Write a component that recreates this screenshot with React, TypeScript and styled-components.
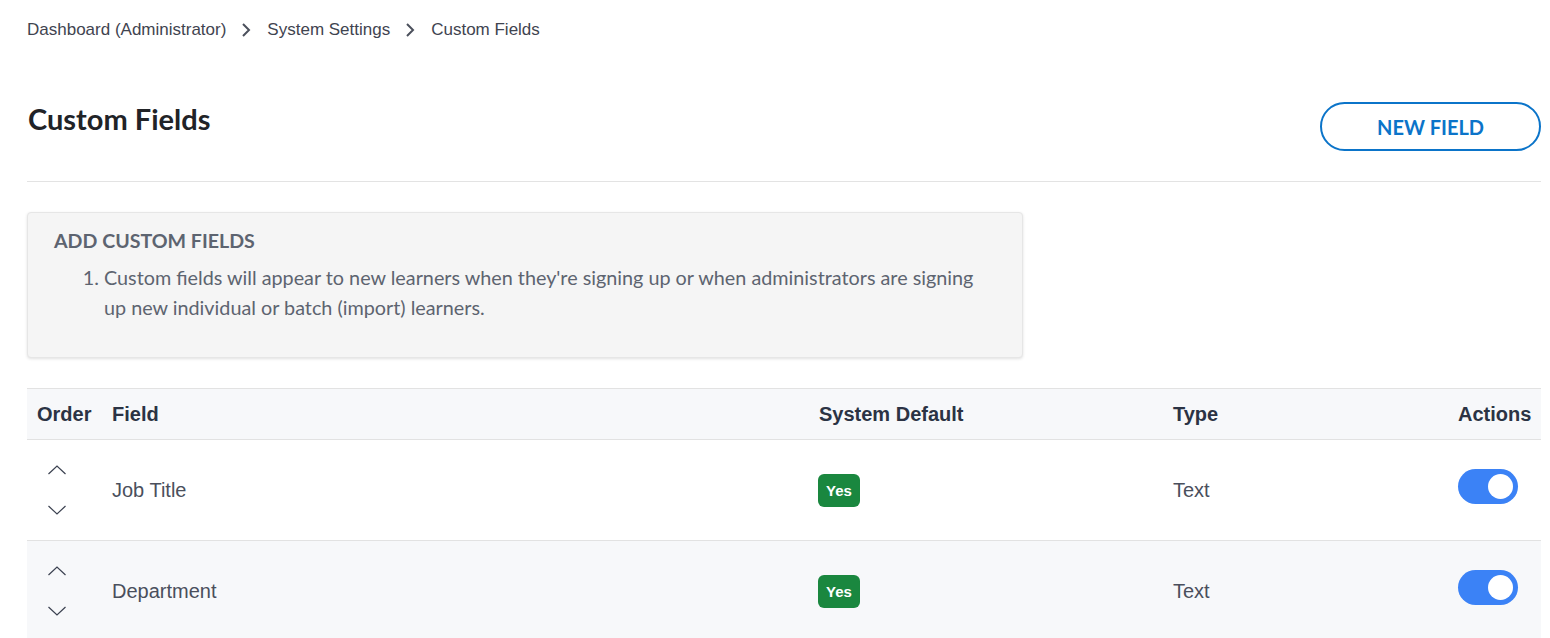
import { useState } from "react";
import styled, { createGlobalStyle } from "styled-components";

type Field = {
  id: number;
  name: string;
  systemDefault: boolean;
  type: string;
  enabled: boolean;
};

const GlobalStyle = createGlobalStyle`
  body {
    margin: 0;
    background: #ffffff;
    font-family: "Liberation Sans", Arial, sans-serif;
  }
`;

const Page = styled.div`
  padding: 0 9px 0 27px;
`;

const Breadcrumb = styled.nav`
  display: flex;
  align-items: center;
  height: 60px;
  font-size: 17px;
  color: #3f4450;
`;

const Crumb = styled.span`
  white-space: nowrap;
`;

const CrumbSep = styled.svg`
  width: 10px;
  height: 16px;
  margin: 0 16px 0 15px;
`;

const Header = styled.div`
  display: flex;
  justify-content: space-between;
  align-items: flex-start;
  height: 122px;
  padding-top: 42px;
  box-sizing: border-box;
  border-bottom: 1px solid #e3e3e3;
`;

const Title = styled.h1`
  margin: 0 0 0 1px;
  font-family: Lato, "Liberation Sans", sans-serif;
  font-weight: 700;
  font-size: 29px;
  line-height: 34px;
  color: #212327;
`;

const NewFieldButton = styled.button`
  width: 221px;
  height: 49px;
  border: 2px solid #0b74c9;
  border-radius: 25px;
  background: #ffffff;
  color: #0b74c9;
  font-family: Lato, "Liberation Sans", sans-serif;
  font-weight: 700;
  font-size: 20px;
  cursor: pointer;
`;

const InfoBox = styled.div`
  width: 996px;
  box-sizing: border-box;
  margin-top: 30px;
  padding: 16px 26px 35px;
  background: #f5f5f5;
  border: 1px solid #e6e6e6;
  border-radius: 4px;
  box-shadow: 0 1px 3px rgba(0, 0, 0, 0.12);
  font-family: Lato, "Liberation Sans", sans-serif;
`;

const InfoTitle = styled.h3`
  margin: 0;
  font-size: 19.6px;
  font-weight: 700;
  color: #5d6470;
  line-height: 24px;
`;

const InfoList = styled.ol`
  margin: 9px 0 0;
  padding-left: 50px;
  font-size: 19.8px;
  line-height: 30px;
  color: #5d6470;
`;

const Table = styled.div`
  margin-top: 30px;
  border-top: 1px solid #e2e2e2;
`;

const Row = styled.div<{ $head?: boolean; $shade?: boolean }>`
  display: grid;
  grid-template-columns: 75px 707px 354px 1fr 73px;
  align-items: center;
  height: ${(p) => (p.$head ? "50px" : "100px")};
  padding: 0 10px;
  border-bottom: 1px solid #e2e2e2;
  background: ${(p) => (p.$head || p.$shade ? "#f7f8fa" : "#ffffff")};
  font-size: 20px;
  color: ${(p) => (p.$head ? "#2b3344" : "#4a4f5c")};
  font-weight: ${(p) => (p.$head ? 700 : 400)};
`;

const OrderCell = styled.div`
  display: flex;
  flex-direction: column;
  align-items: flex-start;
  gap: 30px;
  padding-left: 10px;
`;

const ArrowButton = styled.button`
  display: flex;
  padding: 0;
  border: none;
  background: none;
  cursor: pointer;
`;

const Badge = styled.span`
  display: inline-flex;
  align-items: center;
  justify-content: center;
  width: 42px;
  height: 33px;
  margin-left: -1px;
  border-radius: 6px;
  background: #1a873f;
  color: #ffffff;
  font-weight: 700;
  font-size: 15px;
`;

const SwitchTrack = styled.button<{ $on: boolean }>`
  position: relative;
  display: block;
  width: 60px;
  height: 35px;
  margin-bottom: 7px;
  padding: 0;
  border: none;
  border-radius: 18px;
  background: ${(p) => (p.$on ? "#3b82f6" : "#c8ccd2")};
  cursor: pointer;
`;

const SwitchKnob = styled.span<{ $on: boolean }>`
  position: absolute;
  top: 5px;
  left: ${(p) => (p.$on ? "30px" : "5px")};
  width: 25px;
  height: 25px;
  border-radius: 50%;
  background: #ffffff;
`;

const Chevron = ({ up }: { up?: boolean }) => (
  <svg width="20" height="10" viewBox="0 0 20 10">
    <polyline
      points={up ? "1.5,9 10,1 18.5,9" : "1.5,1 10,9 18.5,1"}
      fill="none"
      stroke="#3b4150"
      strokeWidth="1.2"
    />
  </svg>
);

const initialFields: Field[] = [
  { id: 1, name: "Job Title", systemDefault: true, type: "Text", enabled: true },
  { id: 2, name: "Department", systemDefault: true, type: "Text", enabled: true },
];

const App = () => {
  const [fields, setFields] = useState<Field[]>(initialFields);

  function move(index: number, dir: number) {
    const target = index + dir;
    if (target < 0 || target >= fields.length) return;
    const next = [...fields];
    [next[index], next[target]] = [next[target], next[index]];
    setFields(next);
  }

  function toggle(id: number) {
    setFields((prev) =>
      prev.map((f) => (f.id === id ? { ...f, enabled: !f.enabled } : f))
    );
  }

  return (
    <Page>
      <GlobalStyle />
      <Breadcrumb>
        <Crumb>Dashboard (Administrator)</Crumb>
        <CrumbSep viewBox="0 0 10 16">
          <polyline points="2,2 8,8 2,14" fill="none" stroke="#4b505c" strokeWidth="2" />
        </CrumbSep>
        <Crumb>System Settings</Crumb>
        <CrumbSep viewBox="0 0 10 16">
          <polyline points="2,2 8,8 2,14" fill="none" stroke="#4b505c" strokeWidth="2" />
        </CrumbSep>
        <Crumb>Custom Fields</Crumb>
      </Breadcrumb>

      <Header>
        <Title>Custom Fields</Title>
        <NewFieldButton>NEW FIELD</NewFieldButton>
      </Header>

      <InfoBox>
        <InfoTitle>ADD CUSTOM FIELDS</InfoTitle>
        <InfoList>
          <li>
            Custom fields will appear to new learners when they're signing up or when
            administrators are signing up new individual or batch (import) learners.
          </li>
        </InfoList>
      </InfoBox>

      <Table>
        <Row $head>
          <div>Order</div>
          <div>Field</div>
          <div>System Default</div>
          <div>Type</div>
          <div>Actions</div>
        </Row>
        {fields.map((field, i) => (
          <Row key={field.id} $shade={i % 2 === 1}>
            <OrderCell>
              <ArrowButton onClick={() => move(i, -1)}>
                <Chevron up />
              </ArrowButton>
              <ArrowButton onClick={() => move(i, 1)}>
                <Chevron />
              </ArrowButton>
            </OrderCell>
            <div>{field.name}</div>
            <div>{field.systemDefault && <Badge>Yes</Badge>}</div>
            <div>{field.type}</div>
            <div>
              <SwitchTrack $on={field.enabled} onClick={() => toggle(field.id)}>
                <SwitchKnob $on={field.enabled} />
              </SwitchTrack>
            </div>
          </Row>
        ))}
      </Table>
    </Page>
  );
};

export default App;
